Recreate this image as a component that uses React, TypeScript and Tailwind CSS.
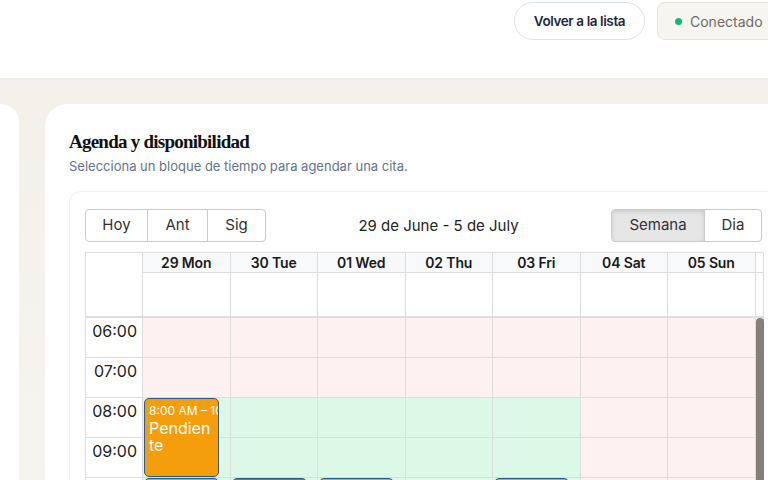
import React from 'react'

const days = ['29 Mon', '30 Tue', '01 Wed', '02 Thu', '03 Fri', '04 Sat', '05 Sun']
const hours = ['06:00', '07:00', '08:00', '09:00', '10:00']

// available from 08:00 on weekdays
const isOpen = (day: number, hour: number) => day < 5 && hour >= 2

type Ev = { day: number; hour: number; span: number; color: string; time?: string; label?: string }

const events: Ev[] = [
  { day: 0, hour: 2, span: 2, color: 'bg-[#f59e0b]', time: '8:00 AM – 10:00 AM', label: 'Pendiente' },
  { day: 0, hour: 4, span: 1, color: 'bg-[#f59e0b]' },
  { day: 1, hour: 4, span: 1, color: 'bg-[#e0456c]' },
  { day: 2, hour: 4, span: 1, color: 'bg-[#f59e0b]' },
  { day: 4, hour: 4, span: 1, color: 'bg-[#f59e0b]' },
]

export default function App() {
  return (
    <div className="w-[768px] h-[480px] overflow-hidden bg-[#f4f1eb] font-['Inter',sans-serif] text-[#1f2937]">
      <div className="w-[802px]">
        <header className="h-[78px] bg-white flex justify-end items-start pt-[2px] pr-[22px] gap-3">
          <button className="h-[38px] w-[131px] rounded-full border border-[#dde3ec] bg-white text-[13.5px] font-semibold tracking-[-0.03em] text-[#1e293b]">
            Volver a la lista
          </button>
          <div className="h-[38px] w-[123px] rounded-lg border border-[#e7e3da] bg-[#f7f5f0] flex items-center gap-[8px] pl-[17px] text-[14px] text-[#6b6b6b]">
            <span className="w-[7px] h-[7px] rounded-full bg-[#10b981]" />
            Conectado
          </div>
        </header>

        <div className="h-[402px] bg-gradient-to-b from-[#f3f0ea] to-[#f6f4ef] flex pt-[26px] gap-[26px]">
          <div className="w-[19px] bg-white rounded-tr-[18px]" />

          <section className="w-[757px] bg-white rounded-tl-[22px] px-6 pt-[26px]">
            <h2 className="font-['Liberation_Serif',serif] font-bold text-[19px] leading-6 tracking-[-0.04em] text-[#111]">
              Agenda y disponibilidad
            </h2>
            <p className="mt-[4px] text-[13px] leading-4 text-[#64748b]">
              Selecciona un bloque de tiempo para agendar una cita.
            </p>

            <div className="mt-[17px] border border-[#efefef] rounded-[12px] px-[15px] pt-4 pb-4">
              <div className="h-[34px] flex items-center text-[15px] text-[#333]">
                <div className="flex h-[33px] border border-[#cccccc] rounded-[4px]">
                  <button className="w-[62px] border-r border-[#cccccc]">Hoy</button>
                  <button className="w-[60px] border-r border-[#cccccc]">Ant</button>
                  <button className="w-[57px]">Sig</button>
                </div>
                <div className="flex-1 text-center text-[#222] pt-[2px]">29 de June - 5 de July</div>
                <div className="flex h-[33px] border border-[#cccccc] rounded-[4px] overflow-hidden">
                  <button className="w-[93px] bg-[#e6e6e6] border-r border-[#cccccc] shadow-[inset_0_2px_4px_rgba(0,0,0,0.12)]">
                    Semana
                  </button>
                  <button className="w-[56px]">Dia</button>
                </div>
              </div>

              <div className="mt-[10px] border-l border-t border-[#dddddd] w-[678px]">
                <div className="grid grid-cols-[57px_repeat(7,87.5px)_8px]">
                  <div className="row-span-2 border-r border-b-2 border-[#dddddd] bg-white" />
                  {days.map((d) => (
                    <div
                      key={d}
                      className="h-[20px] bg-[#f8f9fb] border-r border-b border-[#dddddd] flex items-center justify-center text-[14px] font-semibold tracking-[-0.01em] text-[#1a1a1a]"
                    >
                      {d}
                    </div>
                  ))}
                  <div className="h-[20px] border-r border-b border-[#dddddd]" />
                  {days.map((d) => (
                    <div key={d} className="h-[45px] border-r border-b-2 border-[#dddddd]" />
                  ))}
                  <div className="h-[45px] border-r border-b-2 border-[#dddddd]" />
                </div>

                <div className="grid grid-cols-[57px_repeat(7,87.5px)_8px]">
                  <div className="flex flex-col">
                    {hours.map((h) => (
                      <div
                        key={h}
                        className="h-[40px] shrink-0 border-r border-b border-[#dddddd] text-right pr-[5px] pt-[1px] text-[16px] text-[#222]"
                      >
                        {h}
                      </div>
                    ))}
                  </div>
                  {days.map((d, di) => (
                    <div key={d} className="relative flex flex-col">
                      {hours.map((h, hi) => (
                        <div
                          key={h}
                          className={`h-[40px] shrink-0 border-r border-b border-[#dddddd] ${
                            isOpen(di, hi) ? 'bg-[#dcf9e8]' : 'bg-[#fdf1f1]'
                          }`}
                        />
                      ))}
                      {events
                        .filter((e) => e.day === di)
                        .map((e, i) => (
                          <div
                            key={i}
                            className={`absolute left-[1px] w-[75px] ${e.color} border border-[#2d5b8c] rounded-[5px] pl-[4px] pr-[5px] pt-[4px] text-white overflow-hidden`}
                            style={{ top: e.hour * 40, height: e.span * 40 - 1 }}
                          >
                            {e.time && (
                              <div className="text-[12px] leading-4 whitespace-nowrap">{e.time}</div>
                            )}
                            {e.label && (
                              <div className="mt-[1px] text-[16px] leading-[17px] break-all">{e.label}</div>
                            )}
                          </div>
                        ))}
                    </div>
                  ))}
                  <div className="bg-white border-r border-[#dddddd]">
                    <div className="h-[200px] w-[8px] bg-[#857f78] rounded-t-full" />
                  </div>
                </div>
              </div>
            </div>
          </section>
        </div>
      </div>
    </div>
  )
}
